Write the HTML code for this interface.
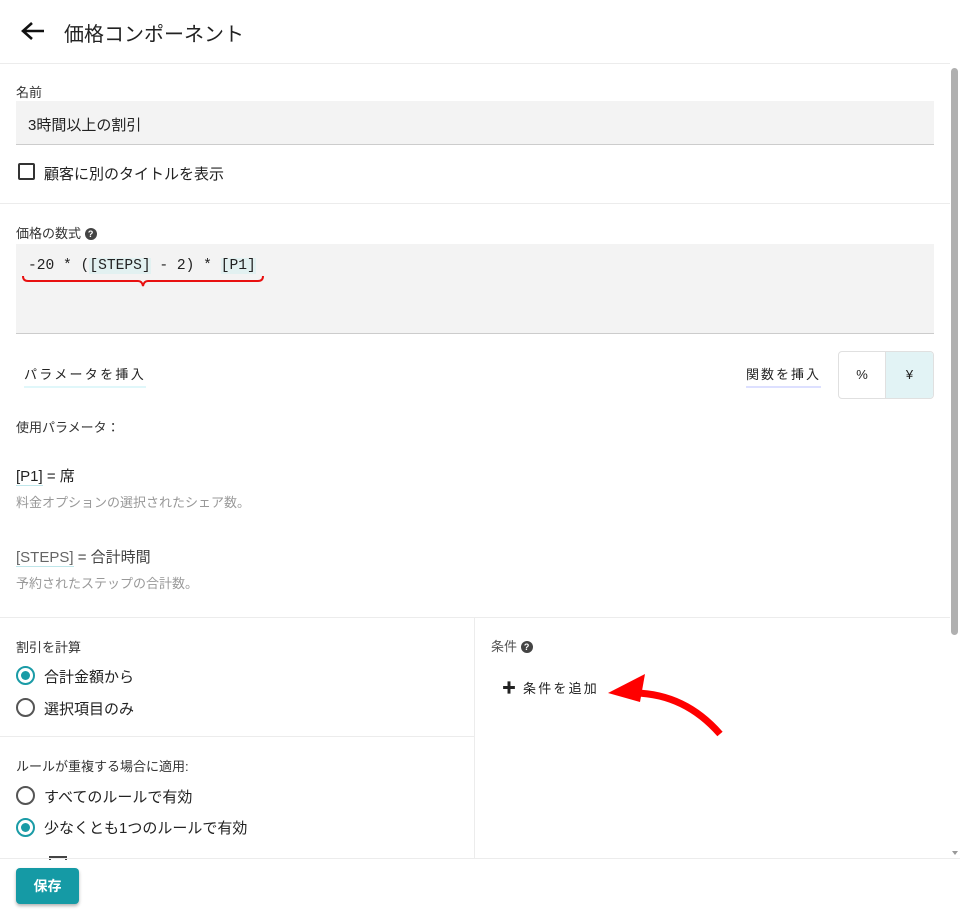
<!DOCTYPE html>
<html><head><meta charset="utf-8"><style>
*{margin:0;padding:0;box-sizing:border-box}
body{width:960px;height:912px;overflow:hidden;background:#fff;font-family:"Liberation Sans","Noto Sans CJK JP",sans-serif;color:#222;position:relative}
.a{position:absolute}
.hr{position:absolute;height:1px;background:#ececec}
.lbl{font-size:13px;color:#333}
.radio{position:absolute;width:19px;height:19px;border:2px solid #555;border-radius:50%}
.radio.on{border-color:#1a9ba6}
.radio.on::after{content:"";position:absolute;left:3px;top:3px;width:9px;height:9px;border-radius:50%;background:#1a9ba6}
.t15{font-size:15px;color:#222}
.q{display:inline-block;width:12px;height:12px;border-radius:50%;background:#444;color:#fff;font-size:9px;font-weight:bold;text-align:center;line-height:12px;vertical-align:1px}
</style></head><body>
<svg class="a" style="left:20px;top:20px" width="26" height="22" viewBox="0 0 26 22"><path d="M24 11H4M12 3L3 11l9 8" stroke="#111" stroke-width="2.6" fill="none"/></svg>
<div class="a" style="left:64px;top:18px;font-size:20px;color:#222">価格コンポーネント</div>
<div class="hr" style="left:0;top:63px;width:950px"></div>
<div class="a lbl" style="left:16px;top:82px">名前</div>
<div class="a" style="left:16px;top:101px;width:918px;height:44px;background:#f3f3f3;border-bottom:1px solid #ccc;font-size:15px;padding:13px 12px">3時間以上の割引</div>
<div class="a" style="left:18px;top:163px;width:17px;height:17px;border:2px solid #333;border-radius:2px"></div>
<div class="a t15" style="left:44px;top:163px">顧客に別のタイトルを表示</div>
<div class="hr" style="left:0;top:203px;width:950px"></div>
<div class="a lbl" style="left:16px;top:223px">価格の数式 <span class="q">?</span></div>
<div class="a" style="left:16px;top:244px;width:918px;height:90px;background:#f3f3f3;border-bottom:1px solid #ccc"></div>
<div class="a" style="left:28px;top:258px;font-family:'Liberation Mono',monospace;font-size:14.6px;color:#222">-20 * (<span style="background:#e2f1f1">[STEPS]</span> - 2) * <span style="background:#e2f1f1">[P1]</span></div>
<svg class="a" style="left:20px;top:274px" width="246" height="16"><path d="M3 2q0 5 5 5h110q4 0 5 5q1-5 5-5h110q5 0 5-5" stroke="#e81010" stroke-width="2" fill="none"/></svg>
<div class="a" style="left:24px;top:364px;font-size:13px;letter-spacing:2.3px;border-bottom:2px solid #e0f7fa;padding-bottom:3px">パラメータを挿入</div>
<div class="a" style="left:746px;top:364px;font-size:13px;letter-spacing:2px;border-bottom:2px solid #dde0ff;padding-bottom:3px">関数を挿入</div>
<div class="a" style="left:838px;top:351px;width:96px;height:48px;border:1px solid #e0e0e0;border-radius:4px;overflow:hidden;display:flex">
<div style="width:47px;text-align:center;line-height:46px;font-size:13px;border-right:1px solid #e0e0e0">%</div>
<div style="flex:1;text-align:center;line-height:46px;font-size:13px;background:#e2f3f5">¥</div></div>
<div class="a lbl" style="left:16px;top:417px">使用パラメータ：</div>
<div class="a t15" style="left:16px;top:465px"><span style="border-bottom:1px solid #bfe6ea">[P1]</span> = 席</div>
<div class="a" style="left:16px;top:492px;font-size:13px;color:#999">料金オプションの選択されたシェア数。</div>
<div class="a t15" style="left:16px;top:546px;color:#444"><span style="color:#666;border-bottom:1px solid #bfe6ea">[STEPS]</span> = 合計時間</div>
<div class="a" style="left:16px;top:573px;font-size:13px;color:#999">予約されたステップの合計数。</div>
<div class="hr" style="left:0;top:617px;width:950px"></div>
<div class="a" style="left:474px;top:618px;width:1px;height:240px;background:#ececec"></div>
<div class="a lbl" style="left:16px;top:637px">割引を計算</div>
<div class="radio on" style="left:16px;top:666px"></div><div class="a t15" style="left:44px;top:666px">合計金額から</div>
<div class="radio" style="left:16px;top:698px"></div><div class="a t15" style="left:44px;top:698px">選択項目のみ</div>
<div class="hr" style="left:0;top:736px;width:474px"></div>
<div class="a lbl" style="left:16px;top:756px">ルールが重複する場合に適用:</div>
<div class="radio" style="left:16px;top:786px"></div><div class="a t15" style="left:44px;top:786px">すべてのルールで有効</div>
<div class="radio on" style="left:16px;top:818px"></div><div class="a t15" style="left:44px;top:817px">少なくとも1つのルールで有効</div>
<div class="a" style="left:49px;top:856px;width:18px;height:4px;border:2px solid #444;border-bottom:none"></div>
<div class="a lbl" style="left:491px;top:636px;color:#555">条件 <span class="q">?</span></div>
<div class="a" style="left:502px;top:678px;font-size:14px;font-weight:bold">✚</div>
<div class="a" style="left:523px;top:678px;font-size:13px;letter-spacing:2.2px">条件を追加</div>
<svg class="a" style="left:605px;top:674px" width="125" height="65"><path d="M30 19Q80 20 115 60" stroke="#f00" stroke-width="7" fill="none"/><path d="M3 19L40 0L35 28Z" fill="#f00"/></svg>
<div class="hr" style="left:0;top:858px;width:960px"></div>
<div class="a" style="left:16px;top:868px;width:63px;height:36px;background:#159aa5;border-radius:4px;color:#fff;font-size:14px;font-weight:bold;text-align:center;line-height:36px;box-shadow:0 2px 3px rgba(0,0,0,.3)">保存</div>
<div class="a" style="left:951px;top:68px;width:7px;height:567px;background:#b0b0b0;border-radius:4px"></div>
<div class="a" style="left:952px;top:851px;width:0;height:0;border-left:3px solid transparent;border-right:3px solid transparent;border-top:4px solid #999"></div>
</body></html>
